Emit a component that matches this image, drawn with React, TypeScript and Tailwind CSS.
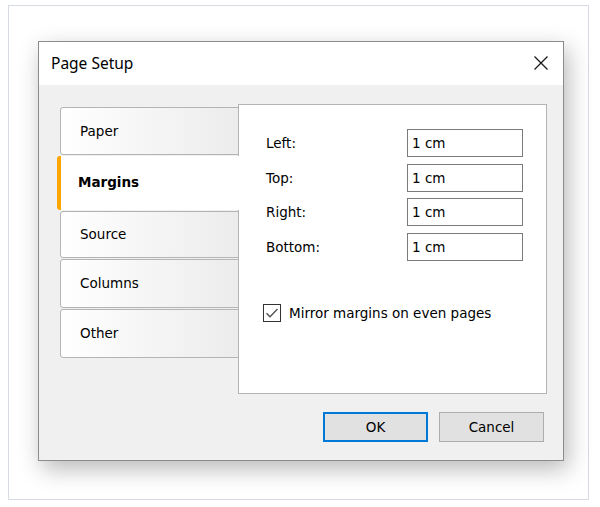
import React from "react";

const tabs = [
  { label: "Paper", h: "h-[48px]" },
  { label: "Margins", h: "h-[54px]", active: true },
  { label: "Source", h: "h-[47px]" },
  { label: "Columns", h: "h-[49px]" },
  { label: "Other", h: "h-[49px]" },
];

const fields = ["Left:", "Top:", "Right:", "Bottom:"];

export default function App() {
  return (
    <div
      className="w-[600px] h-[507px] bg-white pt-[5px] pl-[8px] text-[#000]"
      style={{ fontFamily: '"DejaVu Sans", Tahoma, sans-serif' }}
    >
      <div className="w-[581px] h-[495px] border border-[#d6dbe4] pl-[29px] pt-[35px]">
        <div className="w-[526px] h-[420px] border border-[#8c8c8c] flex flex-col shadow-[4px_8px_22px_rgba(0,0,0,0.28)]">
          {/* Title bar */}
          <div className="h-[43px] bg-white flex items-center justify-between pl-[12px] pr-[14px]">
            <span
              className="text-[15.5px] text-[#000] leading-none"
              style={{ fontFamily: '"Noto Sans", "Open Sans", sans-serif' }}
            >
              Page Setup
            </span>
            <svg width="16" height="16" viewBox="0 0 16 16" className="mt-[-1px]">
              <path d="M1.5 1.5 L14.5 14.5 M14.5 1.5 L1.5 14.5" stroke="#1a1a1a" strokeWidth="1.3" fill="none" />
            </svg>
          </div>
          {/* Body */}
          <div className="flex-1 bg-[#f0f0f0] flex flex-col pl-[18px] pt-[19px]">
            <div className="flex">
              {/* Tabs */}
              <div className="w-[182px] mr-[-1px] z-10 flex flex-col gap-[1px] pt-[3px]">
                {tabs.map((t) =>
                  t.active ? (
                    <div
                      key={t.label}
                      className={`${t.h} bg-white flex items-center rounded-l-[3px] border-l-[4px] border-[#ffa500] pl-[17px] pb-[1px] text-[13.5px] font-bold`}
                    >
                      {t.label}
                    </div>
                  ) : (
                    <div
                      key={t.label}
                      className={`${t.h} ml-[3px] flex items-center rounded-l-[3px] border border-[#b4b4b4] bg-gradient-to-r from-white to-[#ececec] pl-[19px] text-[13.5px]`}
                    >
                      {t.label}
                    </div>
                  )
                )}
              </div>
              {/* Panel */}
              <div className="w-[309px] h-[290px] bg-white border border-[#b4b4b4] flex flex-col pt-[24px] pl-[24px]">
                <div className="flex flex-col gap-[6.67px]">
                  {fields.map((f) => (
                    <div key={f} className="flex items-center h-[28px]">
                      <span className="w-[144px] pl-[3px] text-[13.5px]">{f}</span>
                      <div className="w-[116px] h-[28px] border border-[#7a7a7a] bg-white flex items-center pl-[4px] text-[13.5px]">
                        1 cm
                      </div>
                    </div>
                  ))}
                </div>
                <div className="flex items-center mt-[42px] gap-[8px]">
                  <div className="w-[18px] h-[18px] border border-[#333] bg-white flex items-center justify-center">
                    <svg width="14" height="14" viewBox="0 0 14 14">
                      <path d="M1.5 7.2 L5 10.7 L12.5 3" stroke="#505050" strokeWidth="1.3" fill="none" />
                    </svg>
                  </div>
                  <span className="text-[13.5px]">Mirror margins on even pages</span>
                </div>
              </div>
            </div>
            {/* Buttons */}
            <div className="flex justify-end gap-[11px] pr-[19px] mt-[18px]">
              <button className="w-[105px] h-[30px] bg-[#e1e1e1] border-2 border-[#0078d7] text-[13.5px] flex items-center justify-center">
                OK
              </button>
              <button className="w-[105px] h-[30px] bg-[#e1e1e1] border border-[#adadad] text-[13.5px] flex items-center justify-center">
                Cancel
              </button>
            </div>
          </div>
        </div>
      </div>
    </div>
  );
}
